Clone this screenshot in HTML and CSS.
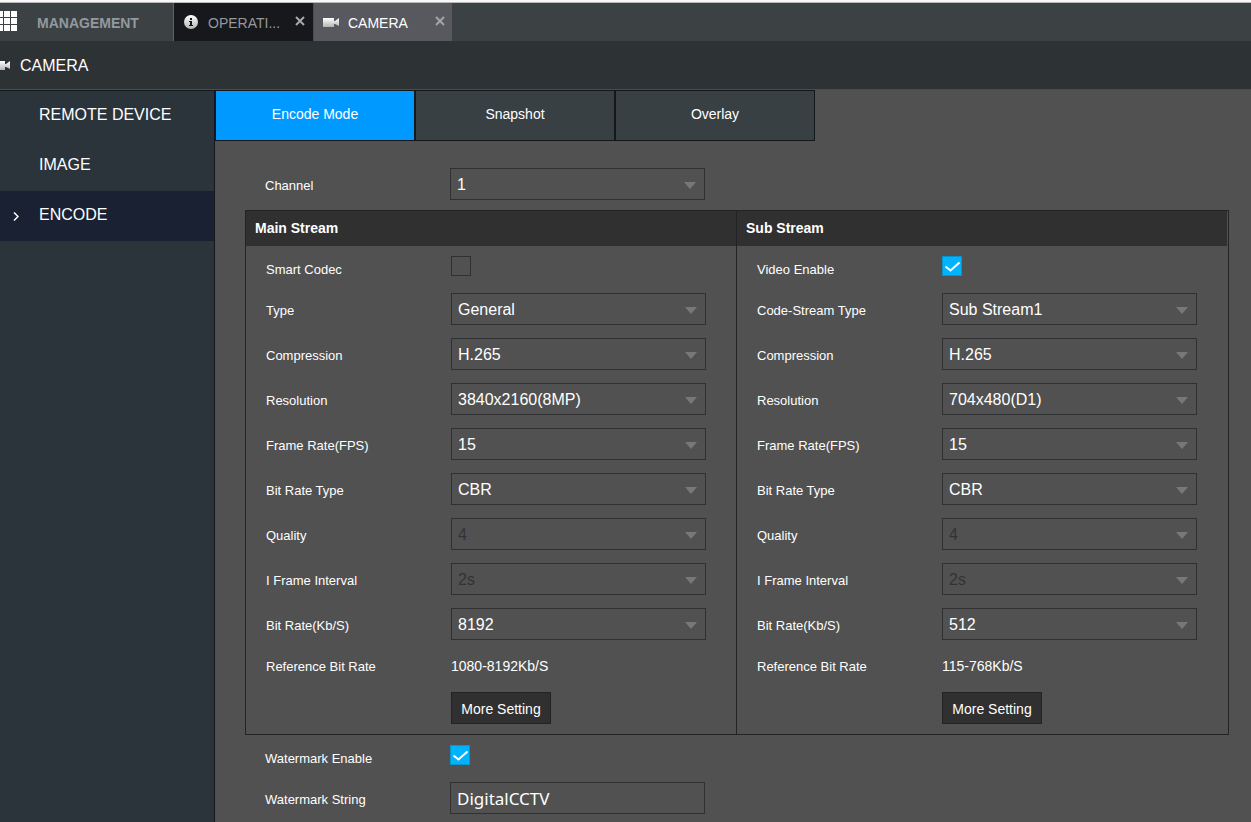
FILE: index.html
```
<!DOCTYPE html>
<html lang="en">
<head>
<meta charset="utf-8">
<title>Camera - Encode</title>
<link rel="stylesheet" href="styles.css">
</head>
<body>
<nav class="topbar" aria-label="Open pages">
  <button class="tab tab-home" type="button">
    <svg class="grid-icon" width="17" height="20" viewBox="0 0 17 20" aria-hidden="true"><path fill="#fff" d="M0 0h3v6H0zM4 0h6v6H4zM11 0h6v6h-6zM0 7h3v6H0zM4 7h6v6H4zM11 7h6v6h-6zM0 14h3v6H0zM4 14h6v6H4zM11 14h6v6h-6z"/></svg>
    <span>MANAGEMENT</span>
  </button>
  <div class="tab tab-operation">
    <svg width="14" height="14" viewBox="0 0 14 14" aria-hidden="true"><defs><linearGradient id="silver" x1="0" y1="0" x2="0" y2="1"><stop offset="0" stop-color="#fff"/><stop offset="1" stop-color="#b4b4b4"/></linearGradient></defs><circle cx="7" cy="7" r="7" fill="url(#silver)"/><path fill="#17181c" d="M6 3h2v2H6zM5 6h3v4h1v1H5v-1h1V7H5z"/></svg>
    <span class="tab-name">OPERATI...</span>
    <button class="close" type="button" aria-label="Close operation"><svg width="10" height="10" viewBox="0 0 10 10"><path d="M1 1l8 8M9 1L1 9" stroke="#a9a9ab" stroke-width="2"/></svg></button>
  </div>
  <div class="tab tab-camera">
    <svg width="16" height="10" viewBox="0 0 16 10" aria-hidden="true"><path fill="url(#silver)" d="M0 1h11v3h1l4-3v8l-4-2h-1v3H0z"/></svg>
    <span class="tab-name">CAMERA</span>
    <button class="close" type="button" aria-label="Close camera"><svg width="10" height="10" viewBox="0 0 10 10"><path d="M1 1l8 8M9 1L1 9" stroke="#a4a4a6" stroke-width="2"/></svg></button>
  </div>
</nav>
<header class="page-head">
  <svg width="10" height="10" viewBox="6 0 10 10" aria-hidden="true"><path fill="url(#silver)" d="M0 1h11v3h1l4-3v8l-4-2h-1v3H0z"/></svg>
  <h1>CAMERA</h1>
</header>
<div class="layout">
  <nav class="sidebar" aria-label="Camera settings">
    <a href="#remote">REMOTE DEVICE</a>
    <a href="#image">IMAGE</a>
    <a href="#encode" class="active"><svg class="chevron" width="6" height="9" viewBox="0 0 6 9" aria-hidden="true"><path d="M1 0.5l4 4-4 4" fill="none" stroke="#fff" stroke-width="1.5"/></svg>ENCODE</a>
  </nav>
  <main class="content">
    <div class="subtabs">
      <button class="active" type="button">Encode Mode</button>
      <button type="button">Snapshot</button>
      <button type="button">Overlay</button>
    </div>
    <form class="settings">
      <div class="row outer"><label for="channel">Channel</label><span class="pick"><select id="channel"><option>1</option></select></span></div>
      <div class="streams">
        <section class="stream">
          <h2>Main Stream</h2>
          <div class="rows">
            <div class="row check"><label for="smart">Smart Codec</label><input type="checkbox" id="smart"></div>
            <div class="row"><label for="m-type">Type</label><span class="pick"><select id="m-type"><option>General</option></select></span></div>
            <div class="row"><label for="m-comp">Compression</label><span class="pick"><select id="m-comp"><option>H.265</option></select></span></div>
            <div class="row"><label for="m-res">Resolution</label><span class="pick"><select id="m-res"><option>3840x2160(8MP)</option></select></span></div>
            <div class="row"><label for="m-fps">Frame Rate(FPS)</label><span class="pick"><select id="m-fps"><option>15</option></select></span></div>
            <div class="row"><label for="m-brt">Bit Rate Type</label><span class="pick"><select id="m-brt"><option>CBR</option></select></span></div>
            <div class="row"><label for="m-q">Quality</label><span class="pick"><select id="m-q" disabled><option>4</option></select></span></div>
            <div class="row"><label for="m-ifi">I Frame Interval</label><span class="pick"><select id="m-ifi" disabled><option>2s</option></select></span></div>
            <div class="row"><label for="m-br">Bit Rate(Kb/S)</label><span class="pick"><select id="m-br"><option>8192</option></select></span></div>
            <div class="row text"><span class="label">Reference Bit Rate</span><span class="value">1080-8192Kb/S</span></div>
            <div class="row"><span class="label"></span><button class="more" type="button">More Setting</button></div>
          </div>
        </section>
        <section class="stream">
          <h2>Sub Stream</h2>
          <div class="rows">
            <div class="row check"><label for="video">Video Enable</label><input type="checkbox" id="video" checked></div>
            <div class="row"><label for="s-type">Code-Stream Type</label><span class="pick"><select id="s-type"><option>Sub Stream1</option></select></span></div>
            <div class="row"><label for="s-comp">Compression</label><span class="pick"><select id="s-comp"><option>H.265</option></select></span></div>
            <div class="row"><label for="s-res">Resolution</label><span class="pick"><select id="s-res"><option>704x480(D1)</option></select></span></div>
            <div class="row"><label for="s-fps">Frame Rate(FPS)</label><span class="pick"><select id="s-fps"><option>15</option></select></span></div>
            <div class="row"><label for="s-brt">Bit Rate Type</label><span class="pick"><select id="s-brt"><option>CBR</option></select></span></div>
            <div class="row"><label for="s-q">Quality</label><span class="pick"><select id="s-q" disabled><option>4</option></select></span></div>
            <div class="row"><label for="s-ifi">I Frame Interval</label><span class="pick"><select id="s-ifi" disabled><option>2s</option></select></span></div>
            <div class="row"><label for="s-br">Bit Rate(Kb/S)</label><span class="pick"><select id="s-br"><option>512</option></select></span></div>
            <div class="row text"><span class="label">Reference Bit Rate</span><span class="value">115-768Kb/S</span></div>
            <div class="row"><span class="label"></span><button class="more" type="button">More Setting</button></div>
          </div>
        </section>
      </div>
      <div class="watermark">
        <div class="row check outer"><label for="wm">Watermark Enable</label><input type="checkbox" id="wm" checked></div>
        <div class="row outer"><label for="wms">Watermark String</label><input type="text" id="wms" value="DigitalCCTV"></div>
      </div>
    </form>
  </main>
</div>
</body>
</html>
```

FILE: styles.css
```
* { box-sizing: border-box; }
html, body { height: 100%; }
body {
  margin: 0;
  display: flex;
  flex-direction: column;
  background: #515151;
  color: #fff;
  font: 14px "Liberation Sans", Arial, sans-serif;
}
button, select, input { font: inherit; color: inherit; margin: 0; border-radius: 0; }
svg { display: block; flex: none; }

.topbar {
  display: flex;
  flex: none;
  height: 41px;
  background: #3c4144;
  border-top: 2px solid #f8f8f8;
  box-shadow: inset 0 1px #b9b9bb;
  padding-top: 1px;
}
.tab { display: flex; align-items: center; border: 0; background: none; }
.tab-home {
  width: 174px;
  padding: 0;
  gap: 20px;
  border-right: 1px solid #606367;
  color: #93999e;
  font-weight: bold;
}
.grid-icon { margin-bottom: 2px; }
.tab-operation { width: 139px; padding: 0 8px 0 10px; gap: 10px; background: #17181c; color: #93999e; }
.tab-camera { width: 139px; padding: 0 7px 0 9px; gap: 9px; background: #58595e; border-left: 1px solid #4a4b50; }
.tab-name { flex: 1; white-space: nowrap; padding-top: 2px; }
.tab-home span { padding-top: 2px; }
.close { padding: 0 0 2px; border: 0; background: none; }

.page-head {
  display: flex;
  flex: none;
  align-items: center;
  height: 49px;
  gap: 10px;
  background: #2d3235;
  border-bottom: 1px solid #484d51;
}
.page-head h1 { margin: 0; padding-top: 2px; font-size: 16px; font-weight: normal; line-height: 46px; }

.layout { display: flex; flex: 1; }
.sidebar {
  width: 215px;
  flex: none;
  background: #2c343b;
  border-top: 1px solid #14181c;
  border-right: 1px solid #14181c;
}
.sidebar a {
  display: flex;
  align-items: center;
  height: 50px;
  padding: 0 0 2px 39px;
  color: #fff;
  font-size: 16px;
  text-decoration: none;
}
.sidebar a.active { background: #192132; padding-left: 13px; gap: 20px; }
.chevron { margin-top: 3px; }

.content { flex: 1; min-width: 0; background: #515151; }
.subtabs { display: flex; }
.subtabs button {
  width: 200px;
  height: 51px;
  padding: 0 0 3px;
  border: 1px solid #14181c;
  background: #384043;
}
.subtabs .active { background: #0099ff; }

.settings { padding: 27px 22px 8px 30px; }
.row { display: flex; align-items: center; height: 32px; }
.row.outer { padding-left: 20px; }
.row label, .label { width: 185px; flex: none; font-size: 13px; padding-top: 2px; }
.row.check { height: 24px; }
.row.text { height: 26px; }
.row.text span { padding-top: 0; }

.pick { position: relative; display: block; width: 255px; }
.pick::after {
  content: "";
  position: absolute;
  top: 14px;
  right: 9px;
  border: 6px solid transparent;
  border-top: 7px solid #77787b;
  border-bottom: 0;
  pointer-events: none;
}
select, input[type="text"] {
  display: block;
  width: 255px;
  height: 32px;
  padding: 0 6px;
  border: 1px solid #2f3031;
  background: transparent;
  font-size: 16px;
  appearance: none;
}
input[type="text"] { font-family: "Noto Sans", sans-serif; font-size: 17px; }
select:disabled { color: #333; opacity: 1; }
input[type="checkbox"] {
  appearance: none;
  align-self: flex-start;
  width: 20px;
  height: 20px;
  border: 1px solid #2f3031;
}
input[type="checkbox"]:checked {
  border-color: #0a94cc;
  background: #00b3ff url("data:image/svg+xml,%3Csvg xmlns='http://www.w3.org/2000/svg' width='18' height='18'%3E%3Cpath d='M2.5 9.5l5 4 9-8' fill='none' stroke='%23fff' stroke-width='2'/%3E%3C/svg%3E") center no-repeat;
}

.streams { display: flex; margin-top: 10px; padding-right: 1px; border: 1px solid #222325; }
.stream { flex: 1; }
.stream + .stream { border-left: 1px solid #222325; }
.stream h2 { margin: 0; padding: 0 9px; background: #303030; font-size: 14px; line-height: 35px; }
.rows { display: flex; flex-direction: column; gap: 13px; padding: 10px 20px; }
.more { width: 100px; height: 32px; padding: 2px 0 0; border: 1px solid #222325; background: #303030; }

.watermark { display: flex; flex-direction: column; gap: 13px; padding-top: 10px; }
```
